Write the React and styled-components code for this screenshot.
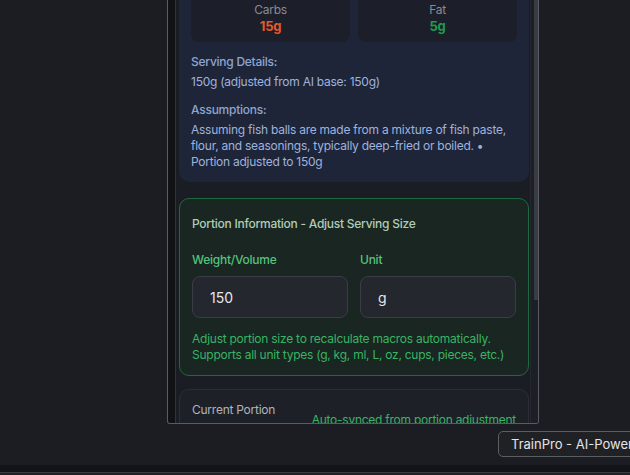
import styled, { createGlobalStyle } from 'styled-components';

const GlobalStyle = createGlobalStyle`
    html, body {
        margin: 0;
        padding: 0;
        background: #1c1d22;
        font-family: Inter, "Noto Sans", sans-serif;
    }
`;

const App = () => {
    return (
        <>
            <GlobalStyle />
            <Page>
                <Stage>
                    <Window>
                        <Inner>
                            <Scroll>
                                <MacroCard>
                                    <MacroGrid>
                                        <MacroBox>
                                            <MacroLabel>Carbs</MacroLabel>
                                            <MacroValue $color="#e2592a">15g</MacroValue>
                                        </MacroBox>
                                        <MacroBox>
                                            <MacroLabel>Fat</MacroLabel>
                                            <MacroValue $color="#1f9a4e">5g</MacroValue>
                                        </MacroBox>
                                    </MacroGrid>
                                    <DetailHeading>Serving Details:</DetailHeading>
                                    <DetailText>150g (adjusted from AI base: 150g)</DetailText>
                                    <DetailHeading>Assumptions:</DetailHeading>
                                    <DetailText>
                                        Assuming fish balls are made from a mixture of fish paste, flour, and seasonings, typically deep-fried or boiled. • Portion adjusted to 150g
                                    </DetailText>
                                </MacroCard>

                                <PortionCard>
                                    <PortionTitle>Portion Information - Adjust Serving Size</PortionTitle>
                                    <FieldGrid>
                                        <Field>
                                            <FieldLabel>Weight/Volume</FieldLabel>
                                            <Input defaultValue="150" readOnly />
                                        </Field>
                                        <Field>
                                            <FieldLabel>Unit</FieldLabel>
                                            <Input defaultValue="g" readOnly />
                                        </Field>
                                    </FieldGrid>
                                    <Hint>
                                        Adjust portion size to recalculate macros automatically.
                                        <br />
                                        Supports all unit types (g, kg, ml, L, oz, cups, pieces, etc.)
                                    </Hint>
                                </PortionCard>

                                <CurrentCard>
                                    <div>
                                        <CurrentLabel>Current Portion</CurrentLabel>
                                        <CurrentValue>150g</CurrentValue>
                                    </div>
                                    <SyncNote>Auto-synced from portion adjustment</SyncNote>
                                </CurrentCard>
                            </Scroll>
                            <Scrollbar>
                                <Thumb />
                            </Scrollbar>
                        </Inner>
                    </Window>
                </Stage>
                <Filler />
                <Footer />
                <FooterEdge />
                <Tooltip>TrainPro - AI-Powered Fitness &amp; Nutrition</Tooltip>
            </Page>
        </>
    );
};

const Page = styled.div`
    position: relative;
    width: 630px;
    height: 475px;
    overflow: hidden;
    display: flex;
    flex-direction: column;
    background: #1c1d22;
    letter-spacing: -0.25px;
`;

const Stage = styled.div`
    display: flex;
    padding-left: 167px;
`;

const Window = styled.div`
    width: 372px;
    height: 424px;
    box-sizing: border-box;
    border: 1px solid #5a5c63;
    border-top: none;
    border-radius: 0 0 3px 3px;
    background: #111216;
    padding-left: 7px;
    display: flex;
    overflow: hidden;
`;

const Inner = styled.div`
    flex: 1;
    display: flex;
    min-width: 0;
    border-left: 1px solid #30333a;
    background: #1b1d24;
`;

const Scroll = styled.div`
    flex: 1;
    min-width: 0;
    overflow: hidden;
    display: flex;
    flex-direction: column;
    padding: 0 1px 0 3px;
`;

const Scrollbar = styled.div`
    width: 8px;
    flex: none;
    display: flex;
    justify-content: flex-end;
    background: #1d1f26;
    border-left: 1px solid #25272e;
    box-sizing: border-box;
`;

const Thumb = styled.div`
    width: 4px;
    height: 300px;
    background: #3a3c44;
`;

const MacroCard = styled.section`
    margin-top: -18px;
    background: #1f2538;
    border-radius: 10px;
    padding: 12px 12px 12px;
`;

const MacroGrid = styled.div`
    display: grid;
    grid-template-columns: 1fr 1fr;
    gap: 8px;
`;

const MacroBox = styled.div`
    background: #1c1f29;
    border-radius: 8px;
    padding: 8px;
    text-align: center;
`;

const MacroLabel = styled.div`
    font-size: 12px;
    line-height: 16px;
    color: #878b95;
`;

const MacroValue = styled.div`
    font-size: 13px;
    line-height: 16px;
    font-weight: 700;
    color: ${(p) => p.$color};
`;

const DetailHeading = styled.div`
    margin-top: 12px;
    font-size: 12px;
    line-height: 16px;
    font-weight: 500;
    color: #8ca5d2;
`;

const DetailText = styled.div`
    margin-top: 4px;
    font-size: 12px;
    line-height: 16px;
    color: #9db3df;
`;

const PortionCard = styled.section`
    margin-top: 16px;
    border: 1px solid #1e6a3c;
    background: #1a2621;
    border-radius: 10px;
    padding: 17px 12px 12px;
`;

const PortionTitle = styled.div`
    font-size: 12px;
    line-height: 16px;
    font-weight: 500;
    color: #afcdb6;
`;

const FieldGrid = styled.div`
    margin-top: 20px;
    display: grid;
    grid-template-columns: 1fr 1fr;
    gap: 12px;
`;

const Field = styled.div`
    display: flex;
    flex-direction: column;
    gap: 8px;
`;

const FieldLabel = styled.label`
    font-size: 12px;
    line-height: 16px;
    font-weight: 500;
    color: #52c47c;
`;

const Input = styled.input`
    width: 100%;
    height: 42px;
    box-sizing: border-box;
    border: 1px solid #3a3d46;
    border-radius: 8px;
    background: #25272f;
    color: #e6e6e8;
    font-family: Inter, "Noto Sans", sans-serif;
    font-size: 14px;
    padding: 0 17px;
    outline: none;
`;

const Hint = styled.p`
    margin: 13px 0 0;
    font-size: 12px;
    line-height: 16px;
    color: #38b464;
`;

const CurrentCard = styled.section`
    margin-top: 13px;
    border: 1px solid #2b2e37;
    background: #1e2028;
    border-radius: 10px;
    padding: 12px;
    display: flex;
    justify-content: space-between;
    align-items: flex-start;
`;

const CurrentLabel = styled.div`
    font-size: 12px;
    line-height: 16px;
    color: #b1b4bb;
`;

const CurrentValue = styled.div`
    margin-top: 4px;
    font-size: 16px;
    line-height: 20px;
    font-weight: 700;
    color: #e6e6e8;
`;

const SyncNote = styled.div`
    padding-top: 10px;
    font-size: 12px;
    line-height: 16px;
    color: #38b464;
`;

const Filler = styled.div`
    flex: 1;
`;

const Footer = styled.div`
    height: 7px;
    background: #131418;
`;

const FooterEdge = styled.div`
    height: 3px;
    box-sizing: border-box;
    border-top: 1px solid #3a3b40;
    background: #1f2025;
`;

const Tooltip = styled.div`
    position: absolute;
    left: 498px;
    top: 431px;
    height: 26px;
    box-sizing: border-box;
    padding: 0 12px;
    border: 1px solid #5c5e64;
    border-radius: 5px;
    background: #202125;
    color: #e4e4e6;
    font-size: 13px;
    line-height: 24px;
    white-space: nowrap;
    letter-spacing: 0;
`;

export default App;
